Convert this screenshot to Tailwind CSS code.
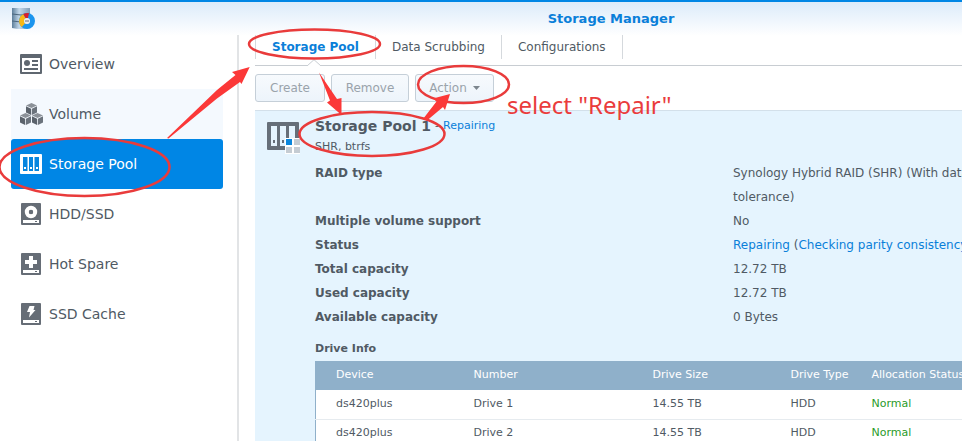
<!DOCTYPE html>
<html lang="en">
<head>
<meta charset="utf-8">
<title>Storage Manager</title>
<script src="https://cdn.jsdelivr.net/npm/@tailwindcss/browser@4"></script>
</head>
<body class="h-screen overflow-hidden bg-white font-[Verdana,'DejaVu_Sans',sans-serif] text-[#505a64]">
<div class="relative flex h-full min-w-[1222px] flex-col border-t-2 border-[#0086e5] bg-linear-to-b from-[#dcebfa] to-white to-[34px]">
  <header class="flex h-[33px] shrink-0 items-center">
    <svg class="ml-3 h-[22px] w-[23px]" viewBox="0 0 23 22" aria-hidden="true">
      <defs><linearGradient id="disk"><stop offset="0" stop-color="#5d7f9b"/><stop offset=".4" stop-color="#c3d8ea"/><stop offset="1" stop-color="#7f9db8"/></linearGradient></defs>
      <path fill="url(#disk)" d="M0 0h18v20q-9 2-18 0z"/>
      <path d="M0 6q9 2 18 0M0 13q9 2 18 0" fill="none" stroke="#4d687f"/>
      <circle cx="15" cy="13" r="5.5" fill="none" stroke="#1c95ee" stroke-width="5"/>
      <path d="M11.500 17.200A5.500 5.500 0 0 1 12.500 8.200" fill="none" stroke="#f9b815" stroke-width="5"/>
      <path d="M12.500 8.200A5.500 5.500 0 0 1 16.500 7.600" fill="none" stroke="#d91f2d" stroke-width="5"/>
      <circle cx="15" cy="13" r="3" fill="#e8eef3"/><path d="M13 13h4" stroke="#667" stroke-width="1"/>
    </svg>
    <h1 class="flex-1 pr-[35px] text-center text-[13px] font-bold text-[#0a7fd9]">Storage Manager</h1>
  </header>
  <div class="flex min-h-0 flex-1">
    <nav class="w-[239px] shrink-0 border-r-2 border-[#e2e4e6] pt-1 pr-[14px] pl-[11px] text-[14px]">
      <a href="#" class="flex h-[50px] items-center gap-[7px] pl-[9px]">
        <svg class="h-[22px] w-[22px]" viewBox="0 0 22 22" fill="#5f6770" aria-hidden="true"><path fill-rule="evenodd" d="M1 1h20a1 1 0 0 1 1 1v18a1 1 0 0 1-1 1H1a1 1 0 0 1-1-1V2a1 1 0 0 1 1-1zM2 5v14h18V5z"/><circle cx="7" cy="10" r="3"/><path d="M12 7h6v2h-6zM12 11h6v2h-6zM4 15h14v2H4z"/></svg>Overview</a>
      <a href="#" class="flex h-[50px] items-center gap-[7px] bg-[#f4f9fe] pl-[9px]">
        <svg class="h-[24px] w-[22px] overflow-visible" viewBox="0 0 22 24" aria-hidden="true">
          <defs><g id="cube"><path fill="#8b9198" d="M0-6 5.500-3.500 0-1-5.500-3.500z"/><path fill="#5b636c" d="M-5.500-2.700-.4-.3V6L-5.500 3.400z"/><path fill="#6b737c" d="M5.500-2.700.4-.3V6L5.500 3.400z"/></g></defs>
          <use href="#cube" x="11.500" y="7"/><use href="#cube" x="5.500" y="17"/><use href="#cube" x="17.500" y="17"/></svg>Volume</a>
      <a href="#" aria-current="page" class="flex h-[50px] items-center gap-[7px] rounded-[3px] bg-[#0086e5] pl-[9px] text-white">
        <svg class="h-[20px] w-[22px]" viewBox="0 0 22 20" aria-hidden="true"><rect width="22" height="20" rx="1" fill="#fff"/><path fill="#0786df" d="M3 3h4.500v14H3zM9 3h4v14H9zM14.500 3H19v14h-4.500z"/><path fill="#fff" d="M4 13h2v2H4zM10 13h2v2h-2zM16 13h2v2h-2z"/></svg>Storage Pool</a>
      <a href="#" class="flex h-[50px] items-center gap-[7px] pl-[9px]">
        <svg class="h-[22px] w-[22px]" viewBox="0 0 22 22" aria-hidden="true"><rect x="1" width="20" height="22" rx="1" fill="#666d76"/><circle cx="11" cy="9" r="4.200" fill="none" stroke="#fff" stroke-width="4"/><circle cx="11" cy="9" r="2" fill="#666d76"/><path fill="#fff" d="M3 17h16v3H3z"/><path fill="#666d76" d="M15 18h2v1h-2z"/></svg>HDD/SSD</a>
      <a href="#" class="flex h-[50px] items-center gap-[7px] pl-[9px]">
        <svg class="h-[22px] w-[22px]" viewBox="0 0 22 22" aria-hidden="true"><rect x="1" width="20" height="22" rx="1" fill="#666d76"/><path fill="#fff" d="M9 3h4v4h4v4h-4v4H9v-4H5V7h4zM3 17h16v3H3z"/><path fill="#666d76" d="M15 18h2v1h-2z"/></svg>Hot Spare</a>
      <a href="#" class="flex h-[50px] items-center gap-[7px] pl-[9px]">
        <svg class="h-[22px] w-[22px]" viewBox="0 0 22 22" aria-hidden="true"><rect x="1" width="20" height="22" rx="1" fill="#666d76"/><path fill="#fff" d="M9.500 3h5l-1 4h2L9 14.500l1-5.500H7zM3 17h16v3H3z"/><path fill="#666d76" d="M15 18h2v1h-2z"/></svg>SSD Cache</a>
    </nav>
    <main class="flex min-w-0 flex-1 flex-col pl-4">
      <div class="relative flex h-[31px] shrink-0 border-b border-[#c8cdd2] text-[12px]">
        <a href="#" aria-current="page" class="flex h-6 items-center border-x border-[#d5d9dd] px-4 font-bold text-[#0a7fd9]">Storage Pool</a>
        <a href="#" class="flex h-6 items-center border-r border-[#d5d9dd] px-4">Data Scrubbing</a>
        <a href="#" class="flex h-6 items-center border-r border-[#d5d9dd] px-4">Configurations</a>
        <svg class="absolute -bottom-px left-[52px] h-[7px] w-[14px]" viewBox="0 0 14 7" aria-hidden="true"><path d="M0 7 7 .7 14 7" fill="#fff" stroke="#c8cdd2"/></svg>
      </div>
      <div class="flex shrink-0 gap-[6px] pt-2 pb-2 text-[12px] text-[#9aa3ab]">
        <button class="h-7 w-[70px] rounded-[3px] border border-[#c5cfd8] bg-linear-to-b from-[#f7fafd] to-[#edf4fb]">Create</button>
        <button class="h-7 w-[78px] rounded-[3px] border border-[#c5cfd8] bg-linear-to-b from-[#f7fafd] to-[#edf4fb]">Remove</button>
        <button class="flex h-7 w-[79px] items-center justify-center gap-[6px] rounded-[3px] border border-[#c5cfd8] bg-linear-to-b from-[#f7fafd] to-[#edf4fb]">Action<svg class="h-1 w-[7px]" viewBox="0 0 7 4" aria-hidden="true"><path fill="#7d868e" d="M0 0h7L3.500 4z"/></svg></button>
      </div>
      <section class="flex min-h-0 flex-1 border-t border-[#d3e0ea] bg-[#e5f4fe] pr-4 pl-3">
        <svg class="mt-[11px] mr-[15px] h-8 w-[33px] shrink-0" viewBox="0 0 33 32" aria-hidden="true"><path fill="#666f79" fill-rule="evenodd" d="M1 0h30q1 0 1 1v27H1q-1 0-1-1V1q0-1 1-1zM4 4v20h6V4zM13 4v20h6V4zM22 4v20h6V4z"/><path fill="#666f79" d="M6 18h2v3H6zM15 18h2v3h-2z"/><path fill="#fff" d="M18 16h15v16H18z"/><path fill="#0a86dc" d="M19 17h6v6h-6z"/><path fill="#c5ccd3" d="M27 17h6v6h-6zM19 25h6v6h-6zM27 25h6v6h-6z"/></svg>
        <div class="min-w-0 flex-1 pt-1">
          <div class="flex h-[22px] items-center gap-1 text-[11px]"><h2 class="text-[14px] font-bold">Storage Pool 1</h2><span>-</span><span class="text-[#0a7fd9]">Repairing</span></div>
          <p class="h-[24px] text-[11px] leading-5">SHR, btrfs</p>
          <dl class="grid grid-cols-[418px_1fr] text-[12px] leading-6 [&>dd]:pr-12 [&>dt]:font-bold">
            <dt>RAID type</dt><dd>Synology Hybrid RAID (SHR) (With data protection of 1-drive fault tolerance)</dd>
            <dt>Multiple volume support</dt><dd>No</dd>
            <dt>Status</dt><dd class="text-[#0a7fd9]">Repairing <span class="text-[#505a64]">(</span>Checking parity consistency<span class="text-[#505a64]">)</span></dd>
            <dt>Total capacity</dt><dd>12.72 TB</dd>
            <dt>Used capacity</dt><dd>12.72 TB</dd>
            <dt>Available capacity</dt><dd>0 Bytes</dd>
          </dl>
          <h3 class="pt-2 text-[11px] leading-6 font-bold">Drive Info</h3>
          <table class="w-full table-fixed border-l border-[#8fb0ca] bg-white text-left text-[11px] [&_td]:h-[29px] [&_td]:pl-5 [&_th]:h-[29px] [&_th]:pl-5 [&_th]:font-normal">
            <colgroup><col class="w-[138px]"><col class="w-[179px]"><col class="w-[138px]"><col class="w-[81px]"><col></colgroup>
            <thead class="bg-[#8fb0ca] text-white"><tr><th>Device</th><th>Number</th><th>Drive Size</th><th>Drive Type</th><th>Allocation Status</th></tr></thead>
            <tbody>
              <tr class="border-b border-[#e6ebef]"><td>ds420plus</td><td>Drive 1</td><td>14.55 TB</td><td>HDD</td><td class="text-[#2a9b2a]">Normal</td></tr>
              <tr class="border-b border-[#e6ebef]"><td>ds420plus</td><td>Drive 2</td><td>14.55 TB</td><td>HDD</td><td class="text-[#2a9b2a]">Normal</td></tr>
            </tbody>
          </table>
        </div>
      </section>
    </main>
  </div>
</div>
<!-- Walkthrough annotations -->
<svg class="pointer-events-none absolute top-0 left-0 h-[220px] w-[520px]" viewBox="0 0 520 220" aria-hidden="true">
  <g fill="none" stroke="#e93b3b" stroke-width="2.500"><ellipse cx="314.500" cy="44" rx="65.500" ry="14.500"/><ellipse cx="463.500" cy="84.500" rx="45.500" ry="18.500"/><ellipse cx="372" cy="134" rx="72.500" ry="22"/><ellipse cx="84.500" cy="167" rx="85" ry="29"/></g>
  <g fill="#fb3838"><path d="M249.700 67 232 72l3.500 3L217 90l-50 48 1.500.5L217 98.500 240 82l1.500 2z"/><path d="M319 72.500 330 100.500l-3 2 14.500 12.500V98l-4.500 1z"/><path d="M450 94 433 98.500l3.500 3L423 119l4 1.500L443 107l2 3z"/></g>
</svg>
<p class="pointer-events-none absolute top-[89px] left-[507px] font-['Noto_Sans',sans-serif] text-[24px] leading-8 text-[#ea3c3c]">select "Repair"</p>
</body>
</html>
